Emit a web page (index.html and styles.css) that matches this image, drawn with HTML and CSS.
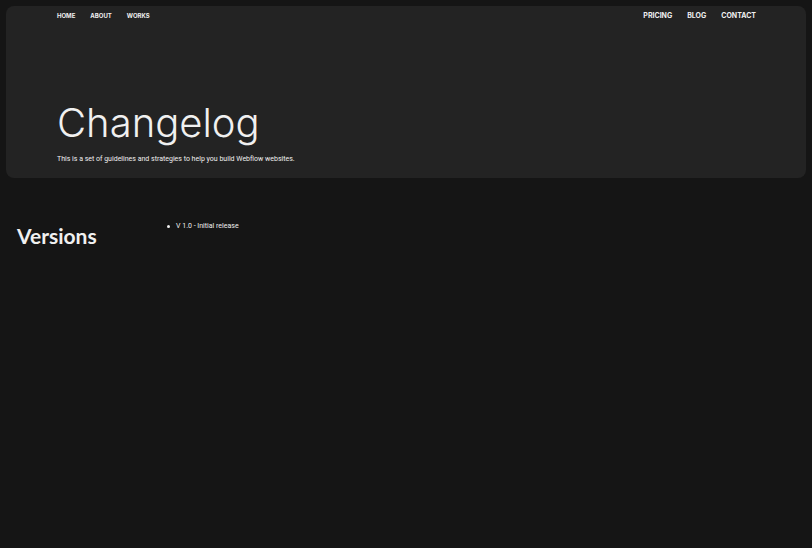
FILE: index.html
```html
<!DOCTYPE html>
<html lang="en">
<head>
<meta charset="utf-8">
<meta name="viewport" content="width=device-width, initial-scale=1">
<title>Changelog</title>
<link rel="stylesheet" href="styles.css">
</head>
<body>
<header class="hero">
  <nav class="nav" aria-label="Main">
    <div class="nav-group nav-group-start">
      <a href="#">HOME</a>
      <a href="#">ABOUT</a>
      <a href="#">WORKS</a>
    </div>
    <div class="nav-group nav-group-end">
      <a href="#">PRICING</a>
      <a href="#">BLOG</a>
      <a href="#">CONTACT</a>
    </div>
  </nav>
  <div class="intro">
    <h1>Changelog</h1>
    <p>This is a set of guidelines and strategies to help you build Webflow websites.</p>
  </div>
</header>
<main class="versions">
  <h2>Versions</h2>
  <ul>
    <li>V 1.0 - Initial release</li>
  </ul>
</main>
</body>
</html>
```
FILE: styles.css
```css
* {
  box-sizing: border-box;
}

body {
  margin: 0;
  padding: 6px;
  background: #151515;
  color: #f0f0f0;
  font-family: Roboto, "Liberation Sans", sans-serif;
  font-size: 7px;
  line-height: 10px;
}

h1,
h2,
p,
ul {
  margin: 0;
}

.hero {
  padding: 5px 50px 14px 51px;
  border-radius: 8px;
  background: #232323;
}

.nav {
  display: flex;
  justify-content: space-between;
}

.nav-group {
  display: flex;
  gap: 15px;
}

.nav a {
  color: inherit;
  font-family: Inter, sans-serif;
  font-weight: 700;
  text-decoration: none;
}

.nav-group-start {
  font-size: 6px;
}

.intro {
  padding-top: 77px;
}

h1 {
  margin-bottom: 6px;
  font-family: Inter, sans-serif;
  font-size: 40px;
  font-weight: 300;
  line-height: 50px;
}

.versions {
  display: grid;
  grid-template-columns: 150px 1fr;
  padding: 43px 11px;
}

h2 {
  font-family: Lato, sans-serif;
  font-size: 21px;
  font-weight: 700;
  line-height: 30px;
}

ul {
  padding: 0;
  list-style: none;
}

li {
  display: flex;
  align-items: center;
  gap: 6px;
}

li::before {
  width: 3px;
  height: 3px;
  border-radius: 50%;
  background: currentColor;
  content: "";
}
```
